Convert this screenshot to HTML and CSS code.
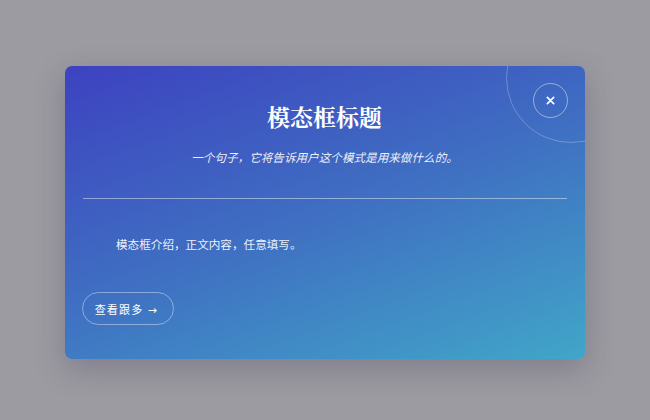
FILE: index.html
```html
<!DOCTYPE html>
<html lang="zh">
<head>
<meta charset="utf-8">
<title>模态框</title>
<link rel="stylesheet" href="styles.css">
</head>
<body>
<div class="modal">
  <span class="deco"></span>
  <button class="close" aria-label="关闭">
    <svg width="9" height="9" viewBox="0 0 10 10"><path d="M1.5 1.5 L8.5 8.5 M8.5 1.5 L1.5 8.5" stroke="#fff" stroke-width="1.9" stroke-linecap="round"/></svg>
  </button>
  <header class="head">
    <h1 class="title">模态框标题</h1>
    <p class="subtitle">一个句子，它将告诉用户这个模式是用来做什么的。</p>
  </header>
  <hr class="divider">
  <p class="content">模态框介绍，正文内容，任意填写。</p>
  <button class="more">查看跟多 <span class="arrow">→</span></button>
</div>
</body>
</html>
```
FILE: styles.css
```css
html, body {
  margin: 0;
  padding: 0;
}
body {
  background: #9c9ba1;
  min-height: 420px;
  display: flex;
  justify-content: center;
  align-items: flex-start;
  padding-top: 66px;
  box-sizing: border-box;
  font-family: "Noto Sans CJK SC", "Noto Sans", sans-serif;
}
.modal {
  position: relative;
  overflow: hidden;
  width: 520px;
  box-sizing: border-box;
  padding: 0 18px 34px 17px;
  border-radius: 7px;
  background: linear-gradient(160deg, #3d42c0 0%, #3f6fc2 50%, #41a6c8 100%);
  box-shadow: 0 10px 30px rgba(40, 40, 80, 0.25);
  color: #fff;
}
.deco {
  position: absolute;
  width: 128px;
  height: 128px;
  top: -53px;
  right: -51px;
  border-radius: 50%;
  border: 1px solid rgba(255, 255, 255, 0.25);
}
.close {
  position: absolute;
  top: 17px;
  right: 17px;
  width: 35px;
  height: 35px;
  border-radius: 50%;
  border: 1px solid rgba(255, 255, 255, 0.45);
  background: transparent;
  padding: 0;
  display: flex;
  align-items: center;
  justify-content: center;
  cursor: pointer;
}
.head {
  text-align: center;
  padding-top: 36px;
}
.title {
  margin: 0;
  font-family: "Noto Serif CJK SC", "Noto Sans CJK SC", serif;
  font-size: 23px;
  line-height: 30px;
  font-weight: 700;
}
.subtitle {
  margin: 16px 0 0;
  font-size: 11.6px;
  line-height: 18px;
  font-style: italic;
  color: rgba(255, 255, 255, 0.92);
}
.divider {
  margin: 32px 0 0 1px;
  border: 0;
  height: 1px;
  background: rgba(255, 255, 255, 0.45);
}
.content {
  margin: 36px 0 0 34px;
  font-size: 11.6px;
  line-height: 18px;
  color: rgba(255, 255, 255, 0.92);
}
.more {
  margin-top: 39px;
  height: 33px;
  width: 92px;
  border-radius: 17px;
  border: 1px solid rgba(255, 255, 255, 0.4);
  background: transparent;
  color: #fff;
  font-family: "Noto Sans CJK SC", "Noto Sans", sans-serif;
  font-size: 11px;
  letter-spacing: 1.2px;
  padding: 0 3px 0 0;
  cursor: pointer;
}
.arrow {
  font-size: 9px;
  font-weight: 700;
  margin-left: 1px;
}
```
